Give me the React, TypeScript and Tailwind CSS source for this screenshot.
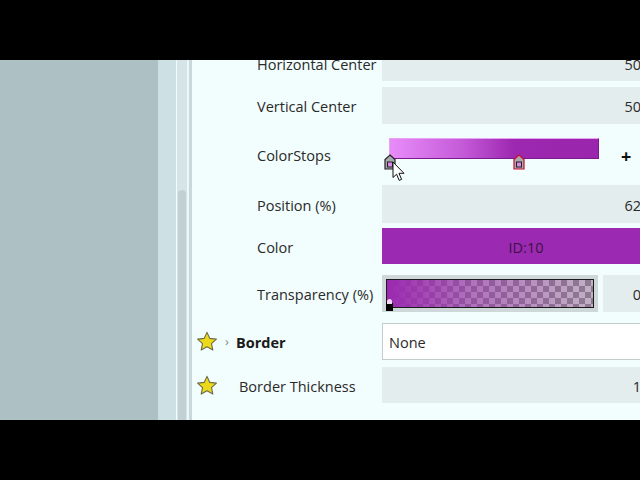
import React from 'react';

const font = { fontFamily: '"Open Sans", "Noto Sans", sans-serif' };

function Star() {
  return (
    <svg width="22" height="21" viewBox="0 0 24 23" className="shrink-0">
      <path
        d="M12 1.5l3.1 6.6 7.2.8-5.4 4.9 1.5 7.1L12 17.3 5.6 20.9l1.5-7.1L1.7 8.9l7.2-.8z"
        fill="#ecd919"
        stroke="#6d6a4a"
        strokeWidth="1.2"
        strokeLinejoin="round"
      />
    </svg>
  );
}

function StopHandle({ selected }: { selected?: boolean }) {
  return (
    <svg width="12" height="16" viewBox="0 0 12 16">
      <path
        d="M6 1L11 5.5V15H1V5.5Z"
        fill="#a8a8b0"
        stroke={selected ? '#c8102e' : '#222'}
        strokeWidth="1.2"
      />
      <rect x="3.5" y="8" width="5" height="5" fill="#d68ae6" stroke="#222" strokeWidth="1" />
    </svg>
  );
}

function Cursor() {
  return (
    <svg width="14" height="21" viewBox="0 0 14 21">
      <path
        d="M1 1V16.5L4.6 13.2L7.2 19.4L9.6 18.4L7 12.3H12Z"
        fill="#fff"
        stroke="#111"
        strokeWidth="1"
        strokeLinejoin="round"
      />
    </svg>
  );
}

function InputBox({ value }: { value: string }) {
  return (
    <div className="flex-1 h-full bg-[#e3eded] flex items-center justify-end pr-[11px] pt-[3px] text-[14.5px] text-[#2a2a2a]">
      {value}
    </div>
  );
}

function Label({ text }: { text: string }) {
  return (
    <div className="w-[190px] shrink-0 pl-[65px] pt-[3px] text-[14.5px] text-[#2a2a2a] whitespace-nowrap">{text}</div>
  );
}

export default function App() {
  return (
    <div className="w-[640px] h-[480px] bg-black flex flex-col overflow-hidden" style={font}>
      <div className="h-[60px] shrink-0" />
      <div className="h-[360px] flex shrink-0 overflow-hidden">
        {/* left canvas + sidebar edge */}
        <div className="w-[158px] shrink-0 bg-[#adc0c3]" />
        <div className="w-[18px] shrink-0 bg-[#cde0e3]" />
        <div className="w-[1px] shrink-0 bg-[#f2fcfd]" />
        <div className="w-[10px] shrink-0 bg-[#d6e4e7] pt-[130px] flex justify-center">
          <div className="w-[8px] h-full rounded-t-full bg-[#c2d0d3]" />
        </div>
        <div className="w-[2px] shrink-0 bg-[#ecf7f8]" />
        <div className="w-[3px] shrink-0 bg-[#c9d8dc]" />

        {/* property panel */}
        <div className="w-[460px] shrink-0 bg-[#f2fdfd] flex flex-col">
          <div className="flex items-center mt-[-15px] h-[36px] shrink-0">
            <Label text="Horizontal Center" />
            <InputBox value="50" />
          </div>

          <div className="flex items-center mt-[6px] h-[37px] shrink-0">
            <Label text="Vertical Center" />
            <InputBox value="50" />
          </div>

          <div className="flex items-center h-[61px] shrink-0">
            <Label text="ColorStops" />
            <div className="flex-1 h-full relative">
              <div className="absolute left-[7px] top-[14px] w-[210px] h-[21px] bg-[linear-gradient(90deg,#e88cf9_0%,#c45ad8_35%,#9c27b0_60%,#9a26ad_100%)] border border-[#7a1a8c] border-t-[#e7a3f2] border-l-[#e7a3f2]" />
              <div className="absolute left-[2px] top-[30px]">
                <StopHandle />
              </div>
              <div className="absolute left-[131px] top-[30px]">
                <StopHandle selected />
              </div>
              <div className="absolute left-[10px] top-[37px]">
                <Cursor />
              </div>
              <div className="absolute left-[239px] top-[23px] text-[18px] font-bold text-[#111] leading-none">+</div>
            </div>
          </div>

          <div className="flex items-center h-[38px] shrink-0">
            <Label text="Position (%)" />
            <InputBox value="62" />
          </div>

          <div className="flex items-center mt-[5px] h-[36px] shrink-0">
            <Label text="Color" />
            <div className="flex-1 h-full mr-[-18px] bg-[#9c29b1] flex items-center justify-center pt-[3px] text-[14.5px] text-[#3b1244]">
              ID:10
            </div>
          </div>

          <div className="flex items-center mt-[11px] h-[37px] shrink-0">
            <Label text="Transparency (%)" />
            <div className="w-[216px] h-full bg-[#cfd8d8] p-[4px] relative shrink-0">
              <div
                className="w-full h-full border border-[#1a1a1a]"
                style={{
                  background:
                    'linear-gradient(90deg, rgba(156,41,177,1) 0%, rgba(156,41,177,0.55) 40%, rgba(156,41,177,0.15) 100%), repeating-conic-gradient(#8a8a8a 0% 25%, #c8c8c8 0% 50%) 0 0 / 12px 12px',
                }}
              />
              <div className="absolute left-[4px] top-[28px] w-[7px] h-[8px] bg-black" />
              <div className="absolute left-[5px] top-[24px] w-[5px] h-[5px] rounded-t-full bg-[#f1d8f5]" />
            </div>
            <div className="ml-[5px] flex-1 h-full flex">
              <InputBox value="0" />
            </div>
          </div>

          <div className="flex items-center mt-[11px] h-[37px] shrink-0">
            <div className="w-[190px] shrink-0 flex items-center pl-[4px]">
              <Star />
              <span className="ml-[7px] text-[#8a8a8a] text-[13px] leading-none">›</span>
              <span className="ml-[7px] pt-[3px] text-[14.5px] font-bold text-[#1a1a1a]">Border</span>
            </div>
            <div className="flex-1 h-full bg-white border border-[#c4cccc] flex items-center pl-[6px] pt-[3px] text-[14.5px] text-[#2a2a2a]">
              None
            </div>
          </div>

          <div className="flex items-center mt-[7px] h-[36px] shrink-0">
            <div className="w-[190px] shrink-0 flex items-center pl-[4px]">
              <Star />
              <span className="ml-[21px] pt-[3px] text-[14.5px] text-[#2a2a2a] whitespace-nowrap">Border Thickness</span>
            </div>
            <InputBox value="1" />
          </div>
        </div>
      </div>
      <div className="flex-1" />
    </div>
  );
}
